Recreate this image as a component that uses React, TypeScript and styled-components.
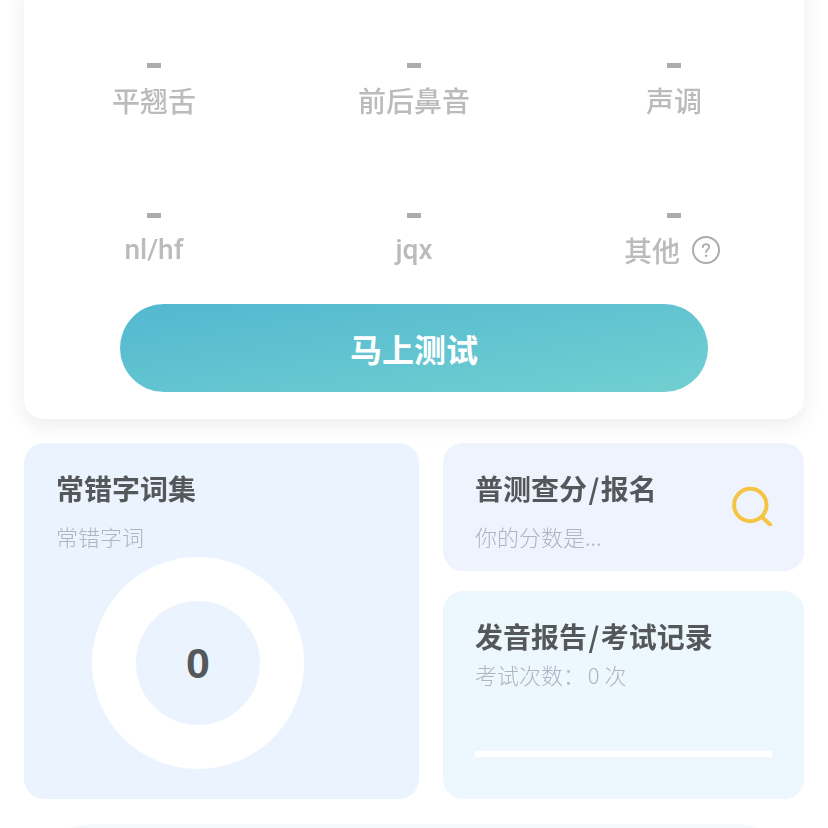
import React from "react";
import styled, { createGlobalStyle } from "styled-components";

const GlobalStyle = createGlobalStyle`
  html, body {
    margin: 0;
    padding: 0;
    background: #ffffff;
  }
  body {
    font-family: "Noto Sans CJK SC", "Noto Sans", sans-serif;
    height: 828px;
    overflow: hidden;
  }
`;

const Page = styled.div`
  height: 828px;
  overflow: hidden;
  padding: 0 24px;
  box-sizing: border-box;
`;

const ScoreCard = styled.section`
  margin-top: -20px;
  height: 439px;
  box-sizing: border-box;
  padding-top: 78px;
  background: #ffffff;
  border-radius: 20px;
  box-shadow: 0 6px 20px rgba(60, 70, 90, 0.1);
`;

const ScoreGrid = styled.div`
  display: grid;
  grid-template-columns: repeat(3, 260px);
  grid-auto-rows: 96px;
  row-gap: 54px;
`;

const ScoreItem = styled.div`
  display: flex;
  flex-direction: column;
  align-items: center;
`;

const Dash = styled.div`
  width: 14px;
  height: 5px;
  margin-top: 5px;
  background: #acacac;
`;

const ScoreLabel = styled.div<{ $latin: boolean }>`
  display: flex;
  align-items: center;
  gap: 12px;
  margin-top: 12px;
  height: 40px;
  font-family: ${(p) => (p.$latin ? '"Roboto", sans-serif' : "inherit")};
  font-size: 28px;
  line-height: 40px;
  font-weight: 500;
  color: #bbbbbb;
  will-change: opacity;
`;

const StartButton = styled.button`
  display: block;
  width: 588px;
  height: 88px;
  margin: 0 auto;
  padding: 0;
  border: none;
  border-radius: 44px;
  background: linear-gradient(to bottom right, #52b8d0 0%, #72d0d1 100%);
  color: #ffffff;
  font-family: inherit;
  font-size: 32px;
  font-weight: 700;
`;

const CardRow = styled.div`
  display: grid;
  grid-template-columns: 395px 361px;
  column-gap: 24px;
  margin-top: 24px;
  height: 356px;
`;

const Tile = styled.div<{ $bg: string }>`
  position: relative;
  box-sizing: border-box;
  padding: 24px 32px 0;
  border-radius: 20px;
  background: ${(p) => p.$bg};
`;

const RightColumn = styled.div`
  display: grid;
  grid-template-rows: 128px 208px;
  row-gap: 20px;
`;

const TileTitle = styled.div`
  font-size: 28px;
  line-height: 42px;
  font-weight: 700;
  color: #54585a;
  will-change: opacity;
`;

const TitleSlash = styled.span`
  margin: 0 1.5px;
`;

const TileSub = styled.div<{ $gap: number }>`
  margin-top: ${(p) => p.$gap}px;
  font-size: 22px;
  line-height: 34px;
  font-weight: 300;
  color: #aeb4c0;
  will-change: opacity;
`;

const Ring = styled.div`
  display: flex;
  align-items: center;
  justify-content: center;
  box-sizing: border-box;
  width: 212px;
  height: 212px;
  margin: 4px 0 0 36px;
  border: 44px solid #ffffff;
  border-radius: 50%;
  font-family: "Liberation Sans", sans-serif;
  font-size: 43px;
  font-weight: 700;
  color: #54585a;
`;

const SearchIcon = styled.svg`
  position: absolute;
  top: 43px;
  right: 32px;
  width: 40px;
  height: 40px;
`;

const ProgressLine = styled.div`
  height: 6px;
  margin: 60px 0 0;
  background: #ffffff;
`;

const NextCard = styled.div`
  height: 160px;
  margin: 25px 0 0;
  border-radius: 70px;
  background: #f7f8fb;
`;

const HelpSvg = styled.svg`
  width: 28px;
  height: 28px;
  margin-right: 4px;
`;

const HelpIcon = () => (
  <HelpSvg viewBox="0 0 28 28" fill="none">
    <circle cx="14" cy="14" r="13" stroke="#acacac" strokeWidth="2" />
    <path
      d="M10.8 11.2c0-1.9 1.4-3 3.2-3s3.2 1.1 3.2 2.8c0 2.5-3.1 2.5-3.1 5.2"
      stroke="#acacac"
      strokeWidth="1.8"
      strokeLinecap="round"
    />
    <circle cx="14.1" cy="19.8" r="1.2" fill="#acacac" />
  </HelpSvg>
);

const scores = ["平翘舌", "前后鼻音", "声调", "nl/hf", "jqx", "其他"];

export default function App() {
  return (
    <Page>
      <GlobalStyle />
      <ScoreCard>
        <ScoreGrid>
          {scores.map((label) => (
            <ScoreItem key={label}>
              <Dash />
              <ScoreLabel $latin={/^[a-z]/.test(label)}>
                {label}
                {label === "其他" && <HelpIcon />}
              </ScoreLabel>
            </ScoreItem>
          ))}
        </ScoreGrid>
        <StartButton>马上测试</StartButton>
      </ScoreCard>

      <CardRow>
        <Tile $bg="#ebf4fe">
          <TileTitle>常错字词集</TileTitle>
          <TileSub $gap={10}>常错字词</TileSub>
          <Ring>0</Ring>
        </Tile>
        <RightColumn>
          <Tile $bg="#eff3fe">
            <TileTitle>
              普测查分<TitleSlash>/</TitleSlash>报名
            </TileTitle>
            <TileSub $gap={10}>你的分数是...</TileSub>
            <SearchIcon viewBox="0 0 40 40" fill="none">
              <circle cx="18.3" cy="19" r="16.2" stroke="#f6c443" strokeWidth="4" />
              <path d="M30 31l8.5 8" stroke="#f6c443" strokeWidth="4" strokeLinecap="round" />
            </SearchIcon>
          </Tile>
          <Tile $bg="#edf7fe">
            <TileTitle>
              发音报告<TitleSlash>/</TitleSlash>考试记录
            </TileTitle>
            <TileSub $gap={0}>考试次数：{"\u200A\u200A"}0 次</TileSub>
            <ProgressLine />
          </Tile>
        </RightColumn>
      </CardRow>

      <NextCard />
    </Page>
  );
}
